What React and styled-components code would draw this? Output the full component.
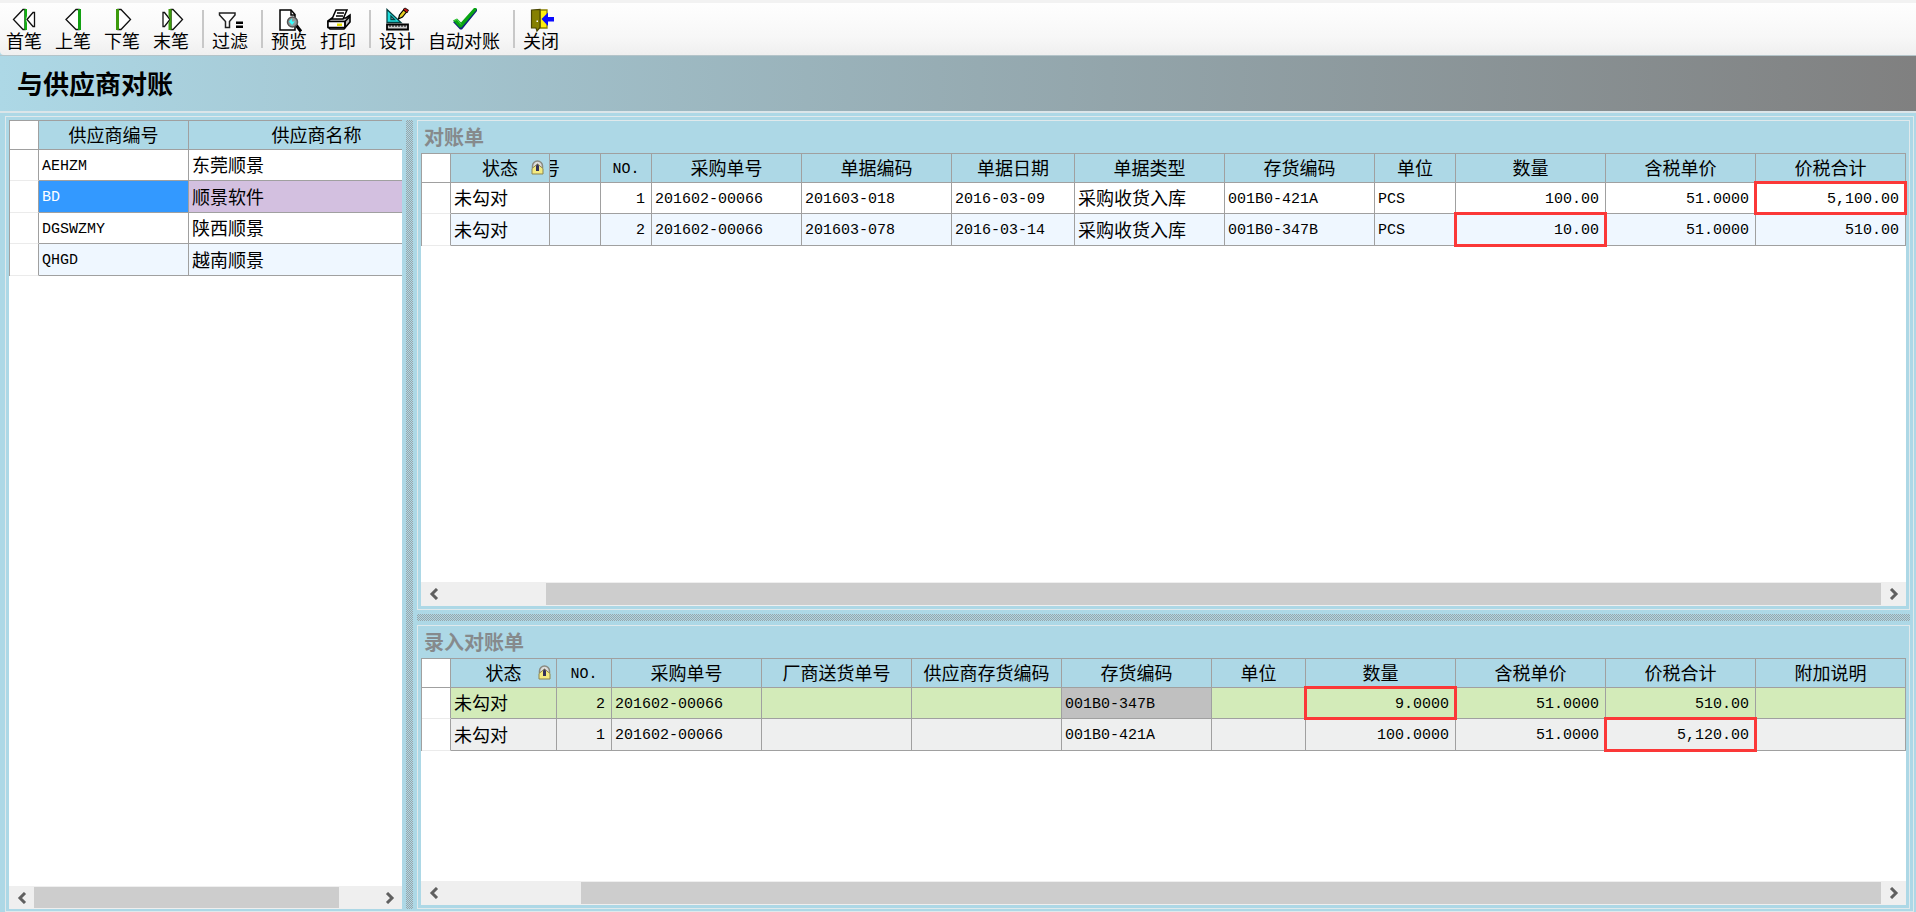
import styled, { createGlobalStyle } from "styled-components";

const GlobalStyle = createGlobalStyle`
  * {
    box-sizing: border-box;
  }

  body {
    margin: 0;
    color: #000;
    background: #add8e6;
    font-family: "Noto Sans CJK SC", sans-serif;
    font-size: 18px;
    line-height: 20px;
  }
`;

const Window = styled.div`
  display: flex;
  flex-direction: column;
  height: 100vh;
  overflow: hidden;
`;

/* ---------- toolbar ---------- */

const Toolbar = styled.div`
  display: flex;
  flex-shrink: 0;
  height: 55px;
  padding-top: 8px;
  background: linear-gradient(#f2f2f2 3px, #fefefe 3px, #f7f7f7 38px, #efefef);
  border-bottom-left-radius: 4px;
`;

const ToolButton = styled.button`
  display: flex;
  flex-direction: column;
  align-items: center;
  height: 42px;
  padding: 0 7px 0 6px;
  border: none;
  background: none;
  font: inherit;
  color: inherit;
  white-space: nowrap;

  svg {
    display: block;
    flex-shrink: 0;
    overflow: visible;
  }
`;

const Separator = styled.div`
  width: 2px;
  height: 38px;
  margin: 2px 2px 0 6px;
  background: #c8c8c8;
`;

const TitleBar = styled.header`
  flex-shrink: 0;
  height: 56px;
  padding: 0 17px;
  background: linear-gradient(to right, #add8e6, #808080);
  border-top: 1px solid #b4c4c9;
`;

const Title = styled.h1`
  margin: 0;
  font-size: 26px;
  line-height: 54px;
  font-weight: 700;
`;

/* ---------- panes ---------- */

const Body = styled.main`
  flex: 1;
  display: flex;
  min-height: 0;
  padding: 3px 2px 0 5px;
  border-top: 2px solid #dbe5e9;
`;

const Frame = styled.div`
  flex: 1;
  display: flex;
  min-width: 0;
  padding: 3px 3px 2px;
  border: 1px solid #e0e9ec;
`;

const SupplierPane = styled.section`
  display: flex;
  flex-direction: column;
  width: 393px;
  flex-shrink: 0;
  background: #fff;
`;

const hatch = "repeating-conic-gradient(#9aa5a9 0 25%, #add8e6 0 50%) 0 0 / 2px 2px";

const VerticalSplitter = styled.div`
  flex: 0 0 15px;
  border: solid #add8e6;
  border-width: 0 4px;
  background: ${hatch};
  background-clip: padding-box;
`;

const HorizontalSplitter = styled.div`
  flex: 0 0 15px;
  border: solid #add8e6;
  border-width: 4px 0;
  background: ${hatch};
  background-clip: padding-box;
`;

const DocumentPanes = styled.div`
  flex: 1;
  display: flex;
  flex-direction: column;
  min-width: 0;
`;

const Panel = styled.section`
  display: flex;
  flex-direction: column;
  flex: ${(props) => (props.$height ? `0 0 ${props.$height}px` : "1")};
  min-height: 0;
  padding: 0 3px 3px;
  border: 1px solid #e0e9ec;
`;

const PanelTitle = styled.h2`
  margin: 0;
  padding: 0 3px;
  font-size: 20px;
  line-height: 32px;
  font-weight: 700;
  color: #868a8c;
`;

const GridArea = styled.div`
  flex: 1;
  min-height: 0;
  background: #fff;
`;

const ClippedGridArea = styled(GridArea)`
  overflow: hidden;
`;

/* ---------- grid ---------- */

const Table = styled.table`
  width: ${(props) => (props.$width ? `${props.$width}px` : "100%")};
  table-layout: fixed;
  border-spacing: 0;
  border-top: 1px solid #a0a0a0;
  border-left: 1px solid #a0a0a0;
`;

const HeadCell = styled.th`
  height: 29px;
  padding: 0 0 2px;
  border-right: 1px solid #a0a0a0;
  border-bottom: 1px solid #a0a0a0;
  background: ${(props) => (props.$blank ? "#fff" : "#add8e6")};
  font-weight: 400;
  text-align: center;
  white-space: nowrap;
`;

const rowColors = {
  white: "#fff",
  pale: "#eff7ff",
  green: "#d3ebb9",
  grey: "#eeefef",
  violet: "#d3c0e0",
};

const Row = styled.tr`
  background: ${(props) => rowColors[props.$tone]};

  & > td {
    height: 32px;
  }

  &:nth-child(odd) > td {
    height: 31px;
  }
`;

const RowHandle = styled.td`
  padding: 0;
  background: #fff;
  border-right: 1px solid #a0a0a0;
  border-bottom: 1px solid #ebebeb;
`;

const cellColors = {
  active: "#3399ff",
  focus: "#c0c0c0",
};

const Cell = styled.td`
  position: relative;
  padding: 0 6px 2px 3px;
  border-right: 1px solid #a0a0a0;
  border-bottom: 1px solid #a0a0a0;
  background: ${(props) => cellColors[props.$state] || "transparent"};
  color: ${(props) => (props.$state === "active" ? "#fff" : "inherit")};
  text-align: ${(props) => props.$align || "left"};
  white-space: nowrap;

  &::after {
    content: "";
    display: ${(props) => (props.$marked ? "block" : "none")};
    position: absolute;
    z-index: 1;
    inset: -2px;
    border: 3px solid #fb3838;
  }
`;

const Mono = styled.span`
  font-family: "Liberation Mono", monospace;
  font-size: 15px;
`;

const LockedHead = styled.span`
  display: grid;
  grid-template-columns: 1fr auto 1fr;
  align-items: center;

  svg {
    grid-column: 3;
    justify-self: end;
    margin-right: 5px;
  }

  span {
    grid-column: 2;
  }
`;

/* heading of a column that is partly scrolled under the locked one */
const ScrolledHead = styled.span`
  display: flex;
  justify-content: flex-end;
  width: 10px;
  overflow: hidden;
`;

/* ---------- scroll bar ---------- */

const Bar = styled.div`
  display: flex;
  flex-shrink: 0;
  height: ${(props) => props.$height || 24}px;
  background: #efefef;
`;

const BarButton = styled.button`
  display: flex;
  align-items: center;
  justify-content: center;
  width: 25px;
  padding: 0;
  border: none;
  background: none;
`;

const Track = styled.div`
  flex: 1;
  padding: 1px 0;
`;

const Thumb = styled.div`
  height: 100%;
  background: #cdcdcd;
`;

function ScrollBar({ label, start, size, height }) {
  return (
    <Bar $height={height}>
      <BarButton type="button" aria-label={`${label} 向左`}>
        <svg width="10" height="12" viewBox="0 0 10 12">
          <path d="M8 1 3 6l5 5" fill="none" stroke="#606060" strokeWidth="3" />
        </svg>
      </BarButton>
      <Track>
        <Thumb style={{ marginLeft: `${start}%`, width: `${size}%` }} />
      </Track>
      <BarButton type="button" aria-label={`${label} 向右`}>
        <svg width="10" height="12" viewBox="0 0 10 12">
          <path d="m2 1 5 5-5 5" fill="none" stroke="#606060" strokeWidth="3" />
        </svg>
      </BarButton>
    </Bar>
  );
}

/* ---------- icons ---------- */

const outline = { fill: "#fff", stroke: "#111", strokeWidth: 1.3 };

const icons = {
  first: (
    <>
      <path d="M2.5 11.5 12 1.5h2v20h-2z" {...outline} />
      <path d="M16 11.5 22 4.5h1.5v14H22z" {...outline} />
      <path d="M13.5 1H16v7l-1 3.500 1 3.500v7h-2.500z" fill="#12b012" />
    </>
  ),
  prev: (
    <>
      <path d="M6 11.5 16 1.5h3v20h-3z" {...outline} />
      <path d="M18 1h3v21h-3z" fill="#12a012" />
    </>
  ),
  next: (
    <>
      <path d="M21.5 11.5 12 1.5H9v20h3z" {...outline} />
      <path d="M7 1h3v21H7z" fill="#3c9a0c" />
    </>
  ),
  last: (
    <>
      <path d="M12 11.5 6.5 4.5H5v14h1.5z" {...outline} />
      <path d="M24.5 11.5 15 1.5h-2v20h2z" {...outline} />
      <path d="M10.5 1h3v21h-3v-7l1.500-3.500-1.500-3.500z" fill="#3c9a0c" />
    </>
  ),
  filter: (
    <>
      <path
        d="M2.500 5h15.500v2l-5.500 6.500v6h-4v-6L2.500 7z"
        fill="#fff"
        stroke="#222"
        strokeWidth="1.5"
      />
      <path d="M19 13.5h7V16h-7zM19 17.5h7V20h-7z" fill="#000" />
    </>
  ),
  preview: (
    <>
      <path d="M4 2h11l4 4.500V22H4z" fill="#fff" stroke="#000" strokeWidth="1.5" />
      <path d="M15 2v5h4" fill="none" stroke="#000" strokeWidth="1.5" />
      <path d="m20 17 5 6.500" stroke="#000" strokeWidth="3" />
      <circle cx="16.5" cy="14" r="5" fill="#8f9c9c" stroke="#555" strokeWidth="1.5" />
      <path d="M13 13.5 16 10.5v3h3L16 17z" fill="#3ff" />
    </>
  ),
  print: (
    <>
      <path
        d="m3 13 4-3h14l4-3v7l-6 7H5l-2-2z"
        fill="#bbb"
        stroke="#000"
        strokeWidth="1.6"
      />
      <path d="M11 2h11l-4 9H7z" fill="#fff" stroke="#000" strokeWidth="1.5" />
      <path d="M12 5h7M11 8h7" stroke="#000" strokeWidth="1.3" />
      <path d="M3 13.5h17v6H3z" fill="#fff" stroke="#000" strokeWidth="1.5" />
      <path d="M12 15.5h5V18h-5z" fill="#e8e000" />
      <path d="m20 13.5 5-5M20 19.5v-6" stroke="#000" strokeWidth="1.5" />
    </>
  ),
  design: (
    <>
      <path
        d="M3 1.5 17 14.5H3zM7 8v3.500h3.500z"
        fill="#20dede"
        fillRule="evenodd"
        stroke="#064040"
        strokeWidth="1.3"
      />
      <path d="M3 16.5h21v5H3z" fill="#ccc" stroke="#000" strokeWidth="1.8" />
      <path d="M6 17v2m3-2v2m3-2v2m3-2v2m3-2v2m3-2v2" stroke="#000" />
      <path d="m14.5 11 1-4 4-5 3 2-4 5z" fill="#e6cf20" stroke="#000" strokeWidth="1.2" />
      <path d="m19 1.5 2-1.500 3.500 2-1.500 3z" fill="#c01818" stroke="#000" strokeWidth="0.8" />
    </>
  ),
  check: (
    <>
      <path d="m2 14 4-2 4 4L23 1h3v2L11 21.5H9z" fill="#102080" />
      <path d="m2 12.5 4-2 4 4L23 0h2.500v2L10.500 19.500H8.500z" fill="#0aa514" />
      <path d="m3.500 12.500 2.500-1 4 5" fill="none" stroke="#52d852" />
    </>
  ),
  close: (
    <>
      <path d="M12 2h7v18h-7z" fill="#ffee10" stroke="#8a8000" strokeWidth="1.3" />
      <path
        d="M3.500 2 12 1.500v18L9 23l-1-3H3.500z"
        fill="#858000"
        stroke="#4a4600"
        strokeWidth="1.2"
      />
      <path d="M8.500 12.500H10V14H8.500z" fill="#fff" />
      <path d="M13.500 11 20 4.500V9h6v4.500h-6V18z" fill="#0a0aff" />
    </>
  ),
};

function ToolIcon({ name }) {
  return (
    <svg width="26" height="22" viewBox="0 0 26 22" aria-hidden="true">
      {icons[name]}
    </svg>
  );
}

function LockIcon() {
  return (
    <svg width="13" height="15" viewBox="0 0 13 15" aria-hidden="true">
      <path d="M1.500 8V6a5 5 0 0 1 10 0v2" fill="#ddd" stroke="#8a8a80" strokeWidth="1.5" />
      <path d="M1 8.500 6.500 4 12 8.500V14H1z" fill="#f4ea80" stroke="#8b8450" />
      <path d="M5 5.500 6.500 4l1.500 1.500V11H5z" fill="#33305a" />
    </svg>
  );
}

/* ---------- data ---------- */

const toolGroups = [
  [
    ["first", "首笔"],
    ["prev", "上笔"],
    ["next", "下笔"],
    ["last", "末笔"],
  ],
  [["filter", "过滤"]],
  [
    ["preview", "预览"],
    ["print", "打印"],
  ],
  [
    ["design", "设计"],
    ["check", "自动对账"],
  ],
  [["close", "关闭"]],
];

const supplierColumns = [
  { title: "供应商编号", width: 150 },
  { title: "供应商名称", width: 256 },
];

const suppliers = [
  { tone: "white", cells: ["AEHZM", "东莞顺景"] },
  { tone: "violet", cells: ["BD", "顺景软件"], states: { 0: "active" } },
  { tone: "white", cells: ["DGSWZMY", "陕西顺景"] },
  { tone: "pale", cells: ["QHGD", "越南顺景"] },
];

const statementColumns = [
  { title: "状态", width: 99, locked: true },
  { title: "号", width: 51, scrolled: true },
  { title: "NO.", width: 51, align: "right" },
  { title: "采购单号", width: 150 },
  { title: "单据编码", width: 150 },
  { title: "单据日期", width: 123 },
  { title: "单据类型", width: 150 },
  { title: "存货编码", width: 150 },
  { title: "单位", width: 81 },
  { title: "数量", width: 150, align: "right" },
  { title: "含税单价", width: 150, align: "right" },
  { title: "价税合计", width: 150, align: "right" },
];

const statements = [
  {
    tone: "white",
    cells: [
      "未勾对",
      "",
      "1",
      "201602-00066",
      "201603-018",
      "2016-03-09",
      "采购收货入库",
      "001B0-421A",
      "PCS",
      "100.00",
      "51.0000",
      "5,100.00",
    ],
    marked: 11,
  },
  {
    tone: "pale",
    cells: [
      "未勾对",
      "",
      "2",
      "201602-00066",
      "201603-078",
      "2016-03-14",
      "采购收货入库",
      "001B0-347B",
      "PCS",
      "10.00",
      "51.0000",
      "510.00",
    ],
    marked: 9,
  },
];

const entryColumns = [
  { title: "状态", width: 106, locked: true },
  { title: "NO.", width: 55, align: "right" },
  { title: "采购单号", width: 150 },
  { title: "厂商送货单号", width: 150 },
  { title: "供应商存货编码", width: 150 },
  { title: "存货编码", width: 150 },
  { title: "单位", width: 94 },
  { title: "数量", width: 150, align: "right" },
  { title: "含税单价", width: 150, align: "right" },
  { title: "价税合计", width: 150, align: "right" },
  { title: "附加说明", width: 150 },
];

const entries = [
  {
    tone: "green",
    cells: [
      "未勾对",
      "2",
      "201602-00066",
      "",
      "",
      "001B0-347B",
      "",
      "9.0000",
      "51.0000",
      "510.00",
      "",
    ],
    states: { 5: "focus" },
    marked: 7,
  },
  {
    tone: "grey",
    cells: [
      "未勾对",
      "1",
      "201602-00066",
      "",
      "",
      "001B0-421A",
      "",
      "100.0000",
      "51.0000",
      "5,120.00",
      "",
    ],
    marked: 9,
  },
];

/* codes and amounts are set in the monospaced face */
function Text({ children }) {
  return /^[\x20-\x7e]+$/.test(children) ? <Mono>{children}</Mono> : children;
}

function ColumnTitle({ column }) {
  if (column.locked) {
    return (
      <LockedHead>
        <span>{column.title}</span>
        <LockIcon />
      </LockedHead>
    );
  }
  if (column.scrolled) return <ScrolledHead>{column.title}</ScrolledHead>;
  return <Text>{column.title}</Text>;
}

function DataGrid({ columns, rows, width }) {
  return (
    <Table $width={width}>
      <colgroup>
        <col width={29} />
        {columns.map((column) => (
          <col key={column.title} width={column.width} />
        ))}
      </colgroup>
      <thead>
        <tr>
          <HeadCell $blank />
          {columns.map((column) => (
            <HeadCell key={column.title} scope="col">
              <ColumnTitle column={column} />
            </HeadCell>
          ))}
        </tr>
      </thead>
      <tbody>
        {rows.map((row, index) => (
          <Row key={index} $tone={row.tone}>
            <RowHandle />
            {row.cells.map((value, i) => (
              <Cell
                key={columns[i].title}
                $align={columns[i].align}
                $state={row.states?.[i]}
                $marked={row.marked === i}
              >
                <Text>{value}</Text>
              </Cell>
            ))}
          </Row>
        ))}
      </tbody>
    </Table>
  );
}

function App() {
  return (
    <Window>
      <GlobalStyle />
      <Toolbar role="toolbar">
        {toolGroups.map((group, index) => [
          index > 0 && <Separator key={`separator-${index}`} />,
          ...group.map(([icon, label]) => (
            <ToolButton key={icon} type="button">
              <ToolIcon name={icon} />
              {label}
            </ToolButton>
          )),
        ])}
      </Toolbar>
      <TitleBar>
        <Title>与供应商对账</Title>
      </TitleBar>
      <Body>
        <Frame>
          <SupplierPane>
            <ClippedGridArea>
              <DataGrid columns={supplierColumns} rows={suppliers} width={436} />
            </ClippedGridArea>
            <ScrollBar label="供应商" start={0} size={89} height={23} />
          </SupplierPane>
          <VerticalSplitter />
          <DocumentPanes>
            <Panel>
              <PanelTitle>对账单</PanelTitle>
              <GridArea>
                <DataGrid columns={statementColumns} rows={statements} />
              </GridArea>
              <ScrollBar label="对账单" start={7} size={93} />
            </Panel>
            <HorizontalSplitter />
            <Panel $height={284}>
              <PanelTitle>录入对账单</PanelTitle>
              <GridArea>
                <DataGrid columns={entryColumns} rows={entries} />
              </GridArea>
              <ScrollBar label="录入对账单" start={9.4} size={90.6} />
            </Panel>
          </DocumentPanes>
        </Frame>
      </Body>
    </Window>
  );
}

export default App;
